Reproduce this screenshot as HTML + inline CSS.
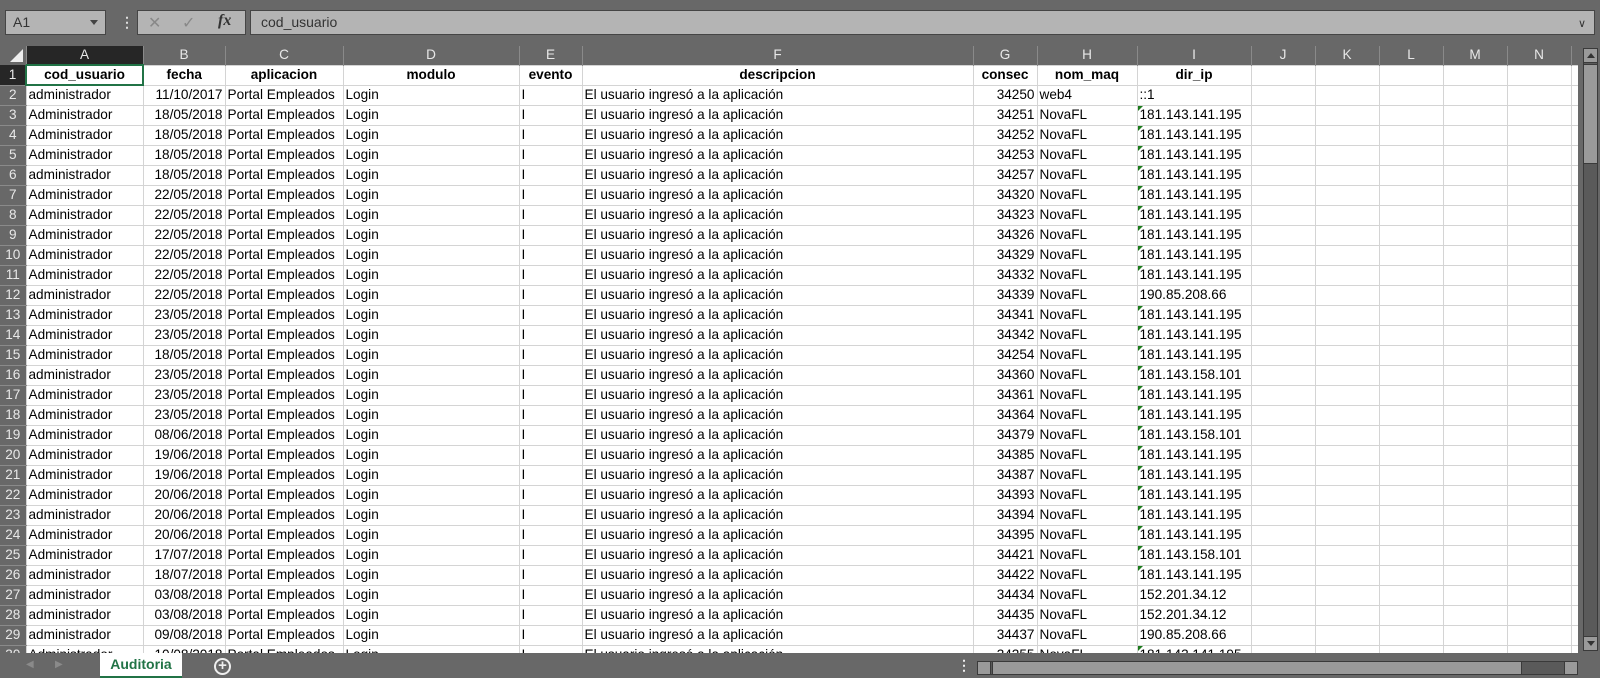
<!DOCTYPE html>
<html><head><meta charset="utf-8"><style>
*{margin:0;padding:0;box-sizing:border-box}
body{width:1600px;height:678px;background:#686868;font-family:"Liberation Sans",sans-serif;position:relative;overflow:hidden}
.abs{position:absolute}
#nb{left:5px;top:10px;width:101px;height:25px;background:#b4b4b4;border:1px solid #454545;font-size:14px;color:#333;padding:3px 0 0 7px}
#fx{left:137px;top:10px;width:109px;height:25px;background:#b4b4b4;border:1px solid #454545;color:#888;font-size:16px}
#fi{left:250px;top:10px;width:1345px;height:25px;background:#b4b4b4;border:1px solid #454545;font-size:14px;color:#333;padding:3px 0 0 10px}
table{position:absolute;left:0;top:46px;border-collapse:collapse;table-layout:fixed;font-size:13.6px;color:#000}
td{height:20px;border:1px solid #d4d4d4;background:#fff;white-space:nowrap;overflow:hidden;padding:0 2px;line-height:18px;position:relative}
tr.h td{height:19px;background:#686868;color:#e8e8e8;text-align:center;border:none;border-right:1px solid #8a8a8a;font-size:13.6px}
td.rh{background:#686868;color:#e8e8e8;text-align:center;border:none;border-bottom:1px solid #8a8a8a;padding:0}
td.r{text-align:right}
tr.t td{font-weight:bold;text-align:center}
.g::before{content:"";position:absolute;left:0;top:0;border-top:5px solid #1c7b1c;border-right:5px solid transparent}
</style></head><body>
<div id="nb" class="abs">A1<span style="position:absolute;right:7px;top:9px;border-top:5px solid #444;border-left:4px solid transparent;border-right:4px solid transparent"></span></div>
<div class="abs" style="left:120px;top:14px;color:#ddd;font-size:14px;font-weight:bold">⋮</div>
<div id="fx" class="abs"><span class="abs" style="left:10px;top:2px">✕</span><span class="abs" style="left:44px;top:2px">✓</span><span class="abs" style="left:80px;top:1px;color:#333;font-style:italic;font-family:'Liberation Serif',serif;font-weight:bold">fx</span></div>
<div id="fi" class="abs">cod_usuario<span style="position:absolute;right:8px;top:6px;color:#333;font-size:11px">&#8744;</span></div>
<table>
<colgroup><col style="width:26px"><col style="width:117px"><col style="width:82px"><col style="width:118px"><col style="width:176px"><col style="width:63px"><col style="width:391px"><col style="width:64px"><col style="width:100px"><col style="width:114px"><col style="width:64px"><col style="width:64px"><col style="width:64px"><col style="width:64px"><col style="width:64px"><col style="width:7px"></colgroup>
<tr class="h"><td style="position:relative"><span style="position:absolute;right:3px;bottom:3px;border-bottom:13px solid #eee;border-left:13px solid transparent"></span></td><td style="background:#262626;border-bottom:2px solid #217346">A</td><td>B</td><td>C</td><td>D</td><td>E</td><td>F</td><td>G</td><td>H</td><td>I</td><td>J</td><td>K</td><td>L</td><td>M</td><td>N</td><td></td></tr>
<tr class="t"><td class="rh" style="background:#262626;font-weight:normal">1</td><td style="border:2px solid #217346">cod_usuario</td><td>fecha</td><td>aplicacion</td><td>modulo</td><td>evento</td><td>descripcion</td><td>consec</td><td>nom_maq</td><td>dir_ip</td><td></td><td></td><td></td><td></td><td></td><td></td></tr>
<tr><td class="rh">2</td><td>administrador</td><td class="r">11/10/2017</td><td>Portal Empleados</td><td>Login</td><td>I</td><td>El usuario ingresó a la aplicación</td><td class="r">34250</td><td>web4</td><td>::1</td><td></td><td></td><td></td><td></td><td></td><td></td></tr>
<tr><td class="rh">3</td><td>Administrador</td><td class="r">18/05/2018</td><td>Portal Empleados</td><td>Login</td><td>I</td><td>El usuario ingresó a la aplicación</td><td class="r">34251</td><td>NovaFL</td><td class="g">181.143.141.195</td><td></td><td></td><td></td><td></td><td></td><td></td></tr>
<tr><td class="rh">4</td><td>Administrador</td><td class="r">18/05/2018</td><td>Portal Empleados</td><td>Login</td><td>I</td><td>El usuario ingresó a la aplicación</td><td class="r">34252</td><td>NovaFL</td><td class="g">181.143.141.195</td><td></td><td></td><td></td><td></td><td></td><td></td></tr>
<tr><td class="rh">5</td><td>Administrador</td><td class="r">18/05/2018</td><td>Portal Empleados</td><td>Login</td><td>I</td><td>El usuario ingresó a la aplicación</td><td class="r">34253</td><td>NovaFL</td><td class="g">181.143.141.195</td><td></td><td></td><td></td><td></td><td></td><td></td></tr>
<tr><td class="rh">6</td><td>administrador</td><td class="r">18/05/2018</td><td>Portal Empleados</td><td>Login</td><td>I</td><td>El usuario ingresó a la aplicación</td><td class="r">34257</td><td>NovaFL</td><td class="g">181.143.141.195</td><td></td><td></td><td></td><td></td><td></td><td></td></tr>
<tr><td class="rh">7</td><td>Administrador</td><td class="r">22/05/2018</td><td>Portal Empleados</td><td>Login</td><td>I</td><td>El usuario ingresó a la aplicación</td><td class="r">34320</td><td>NovaFL</td><td class="g">181.143.141.195</td><td></td><td></td><td></td><td></td><td></td><td></td></tr>
<tr><td class="rh">8</td><td>Administrador</td><td class="r">22/05/2018</td><td>Portal Empleados</td><td>Login</td><td>I</td><td>El usuario ingresó a la aplicación</td><td class="r">34323</td><td>NovaFL</td><td class="g">181.143.141.195</td><td></td><td></td><td></td><td></td><td></td><td></td></tr>
<tr><td class="rh">9</td><td>Administrador</td><td class="r">22/05/2018</td><td>Portal Empleados</td><td>Login</td><td>I</td><td>El usuario ingresó a la aplicación</td><td class="r">34326</td><td>NovaFL</td><td class="g">181.143.141.195</td><td></td><td></td><td></td><td></td><td></td><td></td></tr>
<tr><td class="rh">10</td><td>Administrador</td><td class="r">22/05/2018</td><td>Portal Empleados</td><td>Login</td><td>I</td><td>El usuario ingresó a la aplicación</td><td class="r">34329</td><td>NovaFL</td><td class="g">181.143.141.195</td><td></td><td></td><td></td><td></td><td></td><td></td></tr>
<tr><td class="rh">11</td><td>Administrador</td><td class="r">22/05/2018</td><td>Portal Empleados</td><td>Login</td><td>I</td><td>El usuario ingresó a la aplicación</td><td class="r">34332</td><td>NovaFL</td><td class="g">181.143.141.195</td><td></td><td></td><td></td><td></td><td></td><td></td></tr>
<tr><td class="rh">12</td><td>administrador</td><td class="r">22/05/2018</td><td>Portal Empleados</td><td>Login</td><td>I</td><td>El usuario ingresó a la aplicación</td><td class="r">34339</td><td>NovaFL</td><td>190.85.208.66</td><td></td><td></td><td></td><td></td><td></td><td></td></tr>
<tr><td class="rh">13</td><td>Administrador</td><td class="r">23/05/2018</td><td>Portal Empleados</td><td>Login</td><td>I</td><td>El usuario ingresó a la aplicación</td><td class="r">34341</td><td>NovaFL</td><td class="g">181.143.141.195</td><td></td><td></td><td></td><td></td><td></td><td></td></tr>
<tr><td class="rh">14</td><td>Administrador</td><td class="r">23/05/2018</td><td>Portal Empleados</td><td>Login</td><td>I</td><td>El usuario ingresó a la aplicación</td><td class="r">34342</td><td>NovaFL</td><td class="g">181.143.141.195</td><td></td><td></td><td></td><td></td><td></td><td></td></tr>
<tr><td class="rh">15</td><td>Administrador</td><td class="r">18/05/2018</td><td>Portal Empleados</td><td>Login</td><td>I</td><td>El usuario ingresó a la aplicación</td><td class="r">34254</td><td>NovaFL</td><td class="g">181.143.141.195</td><td></td><td></td><td></td><td></td><td></td><td></td></tr>
<tr><td class="rh">16</td><td>administrador</td><td class="r">23/05/2018</td><td>Portal Empleados</td><td>Login</td><td>I</td><td>El usuario ingresó a la aplicación</td><td class="r">34360</td><td>NovaFL</td><td class="g">181.143.158.101</td><td></td><td></td><td></td><td></td><td></td><td></td></tr>
<tr><td class="rh">17</td><td>Administrador</td><td class="r">23/05/2018</td><td>Portal Empleados</td><td>Login</td><td>I</td><td>El usuario ingresó a la aplicación</td><td class="r">34361</td><td>NovaFL</td><td class="g">181.143.141.195</td><td></td><td></td><td></td><td></td><td></td><td></td></tr>
<tr><td class="rh">18</td><td>Administrador</td><td class="r">23/05/2018</td><td>Portal Empleados</td><td>Login</td><td>I</td><td>El usuario ingresó a la aplicación</td><td class="r">34364</td><td>NovaFL</td><td class="g">181.143.141.195</td><td></td><td></td><td></td><td></td><td></td><td></td></tr>
<tr><td class="rh">19</td><td>Administrador</td><td class="r">08/06/2018</td><td>Portal Empleados</td><td>Login</td><td>I</td><td>El usuario ingresó a la aplicación</td><td class="r">34379</td><td>NovaFL</td><td class="g">181.143.158.101</td><td></td><td></td><td></td><td></td><td></td><td></td></tr>
<tr><td class="rh">20</td><td>Administrador</td><td class="r">19/06/2018</td><td>Portal Empleados</td><td>Login</td><td>I</td><td>El usuario ingresó a la aplicación</td><td class="r">34385</td><td>NovaFL</td><td class="g">181.143.141.195</td><td></td><td></td><td></td><td></td><td></td><td></td></tr>
<tr><td class="rh">21</td><td>Administrador</td><td class="r">19/06/2018</td><td>Portal Empleados</td><td>Login</td><td>I</td><td>El usuario ingresó a la aplicación</td><td class="r">34387</td><td>NovaFL</td><td class="g">181.143.141.195</td><td></td><td></td><td></td><td></td><td></td><td></td></tr>
<tr><td class="rh">22</td><td>Administrador</td><td class="r">20/06/2018</td><td>Portal Empleados</td><td>Login</td><td>I</td><td>El usuario ingresó a la aplicación</td><td class="r">34393</td><td>NovaFL</td><td class="g">181.143.141.195</td><td></td><td></td><td></td><td></td><td></td><td></td></tr>
<tr><td class="rh">23</td><td>administrador</td><td class="r">20/06/2018</td><td>Portal Empleados</td><td>Login</td><td>I</td><td>El usuario ingresó a la aplicación</td><td class="r">34394</td><td>NovaFL</td><td class="g">181.143.141.195</td><td></td><td></td><td></td><td></td><td></td><td></td></tr>
<tr><td class="rh">24</td><td>Administrador</td><td class="r">20/06/2018</td><td>Portal Empleados</td><td>Login</td><td>I</td><td>El usuario ingresó a la aplicación</td><td class="r">34395</td><td>NovaFL</td><td class="g">181.143.141.195</td><td></td><td></td><td></td><td></td><td></td><td></td></tr>
<tr><td class="rh">25</td><td>Administrador</td><td class="r">17/07/2018</td><td>Portal Empleados</td><td>Login</td><td>I</td><td>El usuario ingresó a la aplicación</td><td class="r">34421</td><td>NovaFL</td><td class="g">181.143.158.101</td><td></td><td></td><td></td><td></td><td></td><td></td></tr>
<tr><td class="rh">26</td><td>administrador</td><td class="r">18/07/2018</td><td>Portal Empleados</td><td>Login</td><td>I</td><td>El usuario ingresó a la aplicación</td><td class="r">34422</td><td>NovaFL</td><td class="g">181.143.141.195</td><td></td><td></td><td></td><td></td><td></td><td></td></tr>
<tr><td class="rh">27</td><td>administrador</td><td class="r">03/08/2018</td><td>Portal Empleados</td><td>Login</td><td>I</td><td>El usuario ingresó a la aplicación</td><td class="r">34434</td><td>NovaFL</td><td>152.201.34.12</td><td></td><td></td><td></td><td></td><td></td><td></td></tr>
<tr><td class="rh">28</td><td>administrador</td><td class="r">03/08/2018</td><td>Portal Empleados</td><td>Login</td><td>I</td><td>El usuario ingresó a la aplicación</td><td class="r">34435</td><td>NovaFL</td><td>152.201.34.12</td><td></td><td></td><td></td><td></td><td></td><td></td></tr>
<tr><td class="rh">29</td><td>administrador</td><td class="r">09/08/2018</td><td>Portal Empleados</td><td>Login</td><td>I</td><td>El usuario ingresó a la aplicación</td><td class="r">34437</td><td>NovaFL</td><td>190.85.208.66</td><td></td><td></td><td></td><td></td><td></td><td></td></tr>
<tr><td class="rh">30</td><td>Administrador</td><td class="r">10/08/2018</td><td>Portal Empleados</td><td>Login</td><td>I</td><td>El usuario ingresó a la aplicación</td><td class="r">34255</td><td>NovaFL</td><td class="g">181.143.141.195</td><td></td><td></td><td></td><td></td><td></td><td></td></tr>
</table>
<div class="abs" style="left:1578px;top:46px;width:22px;height:607px;background:#686868"></div>
<div class="abs" style="left:1583px;top:48px;width:15px;height:603px;background:#5a5a5a;border:1px solid #3a3a3a"></div>
<div class="abs" style="left:1583px;top:48px;width:15px;height:15px;background:#9a9a9a;border:1px solid #3a3a3a"><span class="abs" style="left:3px;top:4px;border-bottom:5px solid #333;border-left:4px solid transparent;border-right:4px solid transparent"></span></div>
<div class="abs" style="left:1583px;top:64px;width:15px;height:100px;background:#9a9a9a;border:1px solid #3a3a3a"></div>
<div class="abs" style="left:1583px;top:636px;width:15px;height:15px;background:#9a9a9a;border:1px solid #3a3a3a"><span class="abs" style="left:3px;top:4px;border-top:5px solid #333;border-left:4px solid transparent;border-right:4px solid transparent"></span></div>
<div class="abs" style="left:0;top:653px;width:1600px;height:25px;background:#686868"></div>
<div class="abs" style="left:26px;top:659px;color:#8a8a8a;font-size:10px">◀</div>
<div class="abs" style="left:55px;top:659px;color:#8a8a8a;font-size:10px">▶</div>
<div class="abs" style="left:100px;top:653px;width:82px;height:25px;background:#fff;border-bottom:2px solid #217346;color:#217346;font-weight:bold;font-size:14px;text-align:center;line-height:22px">Auditoria</div>
<div class="abs" style="left:214px;top:658px;width:17px;height:17px;border:2px solid #eee;border-radius:50%;color:#eee;font-size:15px;line-height:12px;text-align:center;font-weight:bold">+</div>
<div class="abs" style="left:957px;top:657px;color:#eee;font-size:14px;font-weight:bold">⋮</div>
<div class="abs" style="left:977px;top:661px;width:601px;height:14px;background:#5a5a5a;border:1px solid #3a3a3a"></div>
<div class="abs" style="left:977px;top:661px;width:14px;height:14px;background:#9a9a9a;border:1px solid #3a3a3a"></div>
<div class="abs" style="left:992px;top:661px;width:530px;height:14px;background:#9a9a9a;border:1px solid #3a3a3a"></div>
<div class="abs" style="left:1564px;top:661px;width:14px;height:14px;background:#9a9a9a;border:1px solid #3a3a3a"></div>
</body></html>
